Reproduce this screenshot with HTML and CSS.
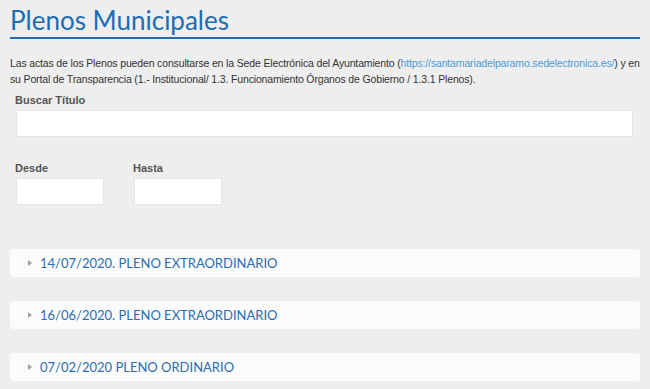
FILE: index.html
```html
<!doctype html>
<html>
<head>
<meta charset="utf-8">
<title>Plenos Municipales</title>
<link rel="stylesheet" href="styles.css">
</head>

<body>
	<div class="page">
		<h1 class="title">Plenos Municipales</h1>
		<p class="intro">Las actas de los Plenos pueden consultarse en la Sede Electrónica del Ayuntamiento (<a href="#">https://santamariadelparamo.sedelectronica.es/</a>) y en su Portal de Transparencia (1.- Institucional/ 1.3. Funcionamiento Órganos de Gobierno / 1.3.1 Plenos).</p>

		<div class="filters">
			<div class="field">
				<label>Buscar Título</label>
				<input type="text" class="input input-wide">
			</div>
			<div class="dates">
				<div class="field">
					<label>Desde</label>
					<input type="text" class="input input-date">
				</div>
				<div class="field">
					<label>Hasta</label>
					<input type="text" class="input input-date">
				</div>
			</div>
		</div>

		<ul class="list">
			<li class="item"><span class="arrow"></span><a href="#">14/07/2020. PLENO EXTRAORDINARIO</a></li>
			<li class="item"><span class="arrow"></span><a href="#">16/06/2020. PLENO EXTRAORDINARIO</a></li>
			<li class="item"><span class="arrow"></span><a href="#">07/02/2020 PLENO ORDINARIO</a></li>
		</ul>
	</div>
</body>
</html>
```

FILE: styles.css
```css
*{
	margin: 0;
	padding: 0;
	list-style: none;
	box-sizing: border-box;
}
body{
	background: #eeeeee;
	font-family: "Liberation Sans", Arial, sans-serif;
	color: #333;
	overflow: hidden;
}
.page{
	width: 630px;
	margin-left: 10px;
}
.title{
	font-family: Lato, "Open Sans", sans-serif;
	font-weight: 400;
	font-size: 26px;
	line-height: 33px;
	padding-top: 4px;
	color: #1c6db4;
	border-bottom: 2px solid #1c6db4;
}
.intro{
	margin-top: 16px;
	font-size: 10.5px;
	letter-spacing: -0.15px;
	line-height: 16px;
	color: #333;
}
.intro a{
	color: #4b9bd8;
	text-decoration: none;
}
.filters{
	padding-left: 6px;
}
.field label{
	display: block;
	font-size: 11px;
	font-weight: bold;
	line-height: 14px;
	color: #555;
	margin-left: -1px;
}
.filters > .field{
	margin-top: 6px;
}
.input{
	display: block;
	margin-top: 3px;
	height: 27px;
	background: #fff;
	border: 1px solid #e6e6e6;
	outline: none;
}
.input-wide{
	width: 617px;
}
.dates{
	display: flex;
	gap: 30px;
	margin-top: 24px;
}
.input-date{
	width: 88px;
}
.list{
	margin-top: 44px;
}
.item{
	display: flex;
	align-items: center;
	height: 28px;
	margin-bottom: 24px;
	padding-left: 18px;
	background: #fbfbfb;
	border-radius: 4px;
}
.arrow{
	width: 0;
	height: 0;
	border-left: 4px solid #a0a0a0;
	border-top: 3px solid transparent;
	border-bottom: 3px solid transparent;
	margin-right: 8px;
}
.item a{
	font-family: Lato, "Open Sans", sans-serif;
	font-size: 13px;
	color: #2b6db0;
	text-decoration: none;
}
```
